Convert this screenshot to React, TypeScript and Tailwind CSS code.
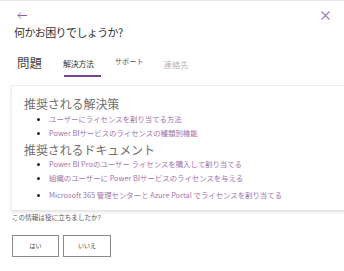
import React from "react";

const font = { fontFamily: '"Noto Sans CJK JP", "Noto Sans", sans-serif' };

const solutions = [
    "ユーザーにライセンスを割り当てる方法",
    "Power BIサービスのライセンスの種類別機能",
];

const docs = [
    "Power BI Proのユーザー ライセンスを購入して割り当てる",
    "組織のユーザーに Power BIサービスのライセンスを与える",
    "Microsoft 365 管理センターと Azure Portal でライセンスを割り当てる",
];

function LinkItem({ text, className }: { text: string; className?: string }) {
    return (
        <li className={`flex items-center h-[14px] ${className ?? ""}`}>
            <span className="w-[3px] h-[3px] rounded-full bg-[#222] ml-[13px] mr-[9px] shrink-0" />
            <span className="text-[7.4px] text-[#a273aa] whitespace-nowrap leading-none">{text}</span>
        </li>
    );
}

export default function App() {
    return (
        <div className="w-[344px] h-[271px] overflow-hidden bg-white border-t border-[#e8e8e8]" style={font}>
            {/* Header */}
            <div className="flex justify-between items-start pl-[17px] pr-[14px] pt-[10px]">
                <svg width="10" height="7" viewBox="0 0 10 7" className="mt-[1px]">
                    <path d="M4 0.5 L1 3.5 L4 6.5 M1 3.5 H10" stroke="#9a5ea6" strokeWidth="1" fill="none" />
                </svg>
                <svg width="9" height="9" viewBox="0 0 9 9">
                    <path d="M0.5 0.5 L8.5 8.5 M8.5 0.5 L0.5 8.5" stroke="#a07aae" strokeWidth="1.1" fill="none" />
                </svg>
            </div>
            <h1 className="text-[11px] text-[#333] leading-none ml-[14px] mt-[7px] tracking-[-0.6px]">
                何かお困りでしょうか?
            </h1>

            {/* Tabs */}
            <div className="flex items-end ml-[17px] mt-[18px] h-[13px] leading-none">
                <span className="text-[12.5px] text-[#444] block">問題</span>
                <div className="relative ml-[21px] h-[10px] flex items-end">
                    <span className="text-[8px] text-[#333] block tracking-[-0.3px] mb-[1px]">解決方法</span>
                    <div className="absolute left-[1px] top-[16px] w-[37px] h-[2px] bg-[#7b3f8e]" />
                </div>
                <span className="text-[7.2px] text-[#555] block ml-[21px] mb-[4px]">サポート</span>
                <span className="text-[8.3px] text-[#b4b4b4] block ml-[20px] mb-[1px]">連絡先</span>
            </div>

            {/* Card */}
            <div className="ml-[11px] mt-[16px] w-[345px] h-[125px] bg-white border-t border-l border-[#eeeeee] shadow-[0_2px_3px_rgba(0,0,0,0.12)] pt-[12px] pl-[12px]">
                <h2 className="text-[12px] text-[#707070] leading-none tracking-[-0.1px]">推奨される解決策</h2>
                <ul className="mt-[2px]">
                    {solutions.map((s) => (
                        <LinkItem key={s} text={s} />
                    ))}
                </ul>
                <h2 className="text-[12px] text-[#707070] leading-none mt-[4px] tracking-[-0.1px]">推奨されるドキュメント</h2>
                <ul className="mt-[1px]">
                    <LinkItem text={docs[0]} />
                    <LinkItem text={docs[1]} />
                    <LinkItem text={docs[2]} className="mt-[3px]" />
                </ul>
            </div>

            {/* Feedback */}
            <p className="text-[6.6px] text-[#555] leading-none ml-[12px] mt-[4px]">この情報は役に立ちましたか?</p>
            <div className="flex gap-[4px] ml-[12px] mt-[14px]">
                <button className="w-[47px] h-[22px] border border-[#8a8a8a] bg-white text-[6px] text-[#444] leading-none">
                    はい
                </button>
                <button className="w-[48px] h-[22px] border border-[#8a8a8a] bg-white text-[6px] text-[#444] leading-none">
                    いいえ
                </button>
            </div>
        </div>
    );
}
